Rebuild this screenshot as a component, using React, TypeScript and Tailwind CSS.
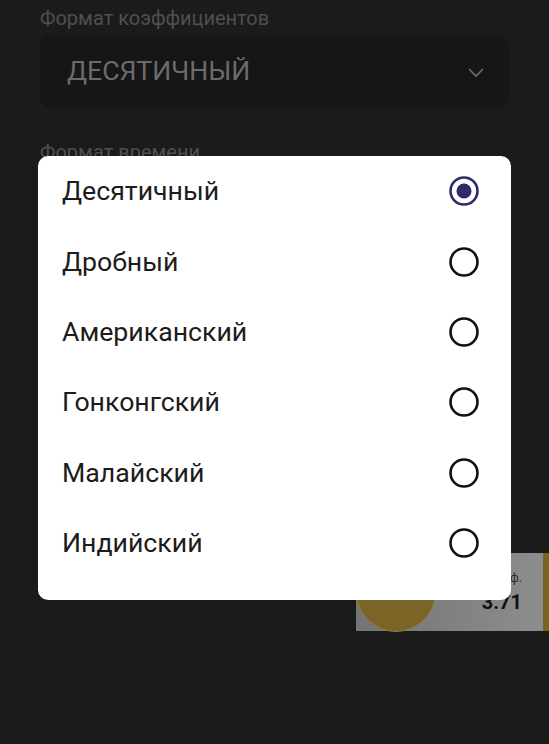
import React from 'react';

const OPTIONS = ['Десятичный', 'Дробный', 'Американский', 'Гонконгский', 'Малайский', 'Индийский'];

const Radio = ({ checked }: { checked: boolean }) => (
  <svg width="32" height="32" viewBox="0 0 32 32">
    <circle cx="16" cy="16" r="13.5" fill="none" stroke={checked ? '#2f2a6a' : '#111111'} strokeWidth="2.6" />
    {checked && <circle cx="16" cy="16" r="7.5" fill="#2f2a6a" />}
  </svg>
);

export default function App() {
  const selected = 0;

  return (
    <div
      className="relative h-[744px] w-full overflow-hidden bg-[#1b1b1b]"
      style={{ fontFamily: 'Roboto, "Noto Sans", sans-serif' }}
    >
      {/* settings page, dimmed behind the dialog */}
      <div className="flex flex-col px-[40px]">
        <div className="pt-[4px] text-[20px] leading-[28px] text-[#4f4f4f]">Формат коэффициентов</div>
        <div className="mt-[3px] flex h-[73px] items-center justify-between rounded-[10px] bg-[#161616] pl-[27px] pr-[24px]">
          <span className="text-[26.7px] text-[#6b6b6b]">ДЕСЯТИЧНЫЙ</span>
          <svg width="18" height="12" viewBox="0 0 18 12">
            <path d="M2 3 L9 10 L16 3" fill="none" stroke="#6f6f6f" strokeWidth="1.6" />
          </svg>
        </div>
        <div className="mt-[30px] text-[20px] leading-[28px] text-[#4f4f4f]">Формат времени</div>
      </div>

      {/* bet slip card peeking out at the bottom right */}
      <div className="absolute left-[356px] top-[553px] flex h-[78px] w-[193px] bg-gradient-to-r from-[#747474] to-[#8e8e8e]">
        <div className="absolute left-[0px] top-[-1px] h-[80px] w-[80px] rounded-full border border-[#8f7d45] bg-[#7a6426]" />
        <div className="ml-auto mr-[21px] flex flex-col items-end pt-[17px]">
          <span className="text-[12px] leading-[16px] text-[#2a2a2a]">Коэф.</span>
          <span className="mt-[4px] text-[20px] font-bold leading-[24px] text-[#111111]">3.71</span>
        </div>
        <div className="h-full w-[6px] bg-[#7a6424]" />
      </div>

      {/* odds format dialog */}
      <div className="absolute left-[38px] top-[156px] w-[473px] rounded-[10px] bg-white pb-[22px]">
        {OPTIONS.map((opt, i) => (
          <div key={opt} className="flex h-[70.4px] items-center justify-between pl-[24px] pr-[31px]">
            <span className="text-[26.7px] text-[#1c1c1c]">{opt}</span>
            <Radio checked={i === selected} />
          </div>
        ))}
      </div>
    </div>
  );
}
